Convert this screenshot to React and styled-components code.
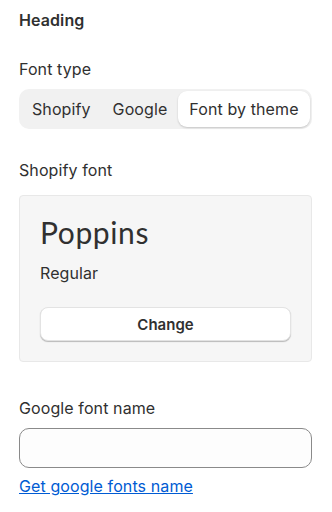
import React from "react";
import styled, { createGlobalStyle } from "styled-components";

const GlobalStyle = createGlobalStyle`
  body {
    margin: 0;
    background: #ffffff;
    font-family: "Inter", "Liberation Sans", sans-serif;
    color: #303030;
    letter-spacing: 0.1px;
  }
`;

const Panel = styled.div`
  padding: 8px 20px 20px 19px;
  display: flex;
  flex-direction: column;
`;

const Heading = styled.h2`
  margin: 0;
  font-size: 16px;
  font-weight: 600;
  line-height: 24px;
  color: #303030;
`;

const Label = styled.div`
  font-size: 16px;
  line-height: 24px;
  color: #303030;
  margin-top: ${(p) => p.top || 0}px;
  margin-bottom: ${(p) => p.bottom || 8}px;
`;

const Segmented = styled.div`
  display: flex;
  align-items: center;
  height: 40px;
  box-sizing: border-box;
  padding: 2px;
  background: #f1f1f1;
  border-radius: 10px;
`;

const Segment = styled.button`
  flex-shrink: 0;
  white-space: nowrap;
  border: 0;
  font-family: inherit;
  font-size: 16px;
  letter-spacing: 0.1px;
  color: #303030;
  height: 36px;
  padding: 0 11px;
  border-radius: 9px;
  background: ${(p) => (p.active ? "#ffffff" : "transparent")};
  box-shadow: ${(p) => (p.active ? "0 1px 2px rgba(0,0,0,0.18)" : "none")};
  cursor: pointer;
`;

const Card = styled.div`
  background: #f6f6f6;
  border: 1px solid #e8e8e8;
  border-radius: 4px;
  padding: 18px 20px 20px 20px;
  display: flex;
  flex-direction: column;
`;

const FontName = styled.div`
  font-family: "Lato", "Inter", sans-serif;
  font-size: 30px;
  letter-spacing: 0.6px;
  line-height: 36px;
  color: #303030;
`;

const Variant = styled.div`
  font-size: 16px;
  line-height: 22px;
  margin-top: 12px;
`;

const ChangeButton = styled.button`
  margin-top: 23px;
  height: 34px;
  background: #ffffff;
  border: 1px solid #e3e3e3;
  border-radius: 8px;
  box-shadow: 0 1px 1px rgba(0, 0, 0, 0.25);
  font-family: inherit;
  font-size: 15px;
  font-weight: 600;
  color: #303030;
`;

const TextInput = styled.input`
  height: 40px;
  box-sizing: border-box;
  border: 1px solid #8a8a8a;
  border-radius: 10px;
  background: #fdfdfd;
  padding: 0 12px;
  font-family: inherit;
  font-size: 16px;
`;

const HelpLink = styled.a`
  margin-top: 7px;
  font-size: 16px;
  line-height: 22px;
  color: #005bd3;
  text-decoration: underline;
  align-self: flex-start;
`;

export default function App() {
  return (
    <>
      <GlobalStyle />
      <Panel>
        <Heading>Heading</Heading>
        <Label top={25}>Font type</Label>
        <Segmented>
          <Segment>Shopify</Segment>
          <Segment>Google</Segment>
          <Segment active>Font by theme</Segment>
        </Segmented>
        <Label top={29} bottom={13}>Shopify font</Label>
        <Card>
          <FontName>Poppins</FontName>
          <Variant>Regular</Variant>
          <ChangeButton>Change</ChangeButton>
        </Card>
        <Label top={34}>Google font name</Label>
        <TextInput />
        <HelpLink href="#">Get google fonts name</HelpLink>
      </Panel>
    </>
  );
}
